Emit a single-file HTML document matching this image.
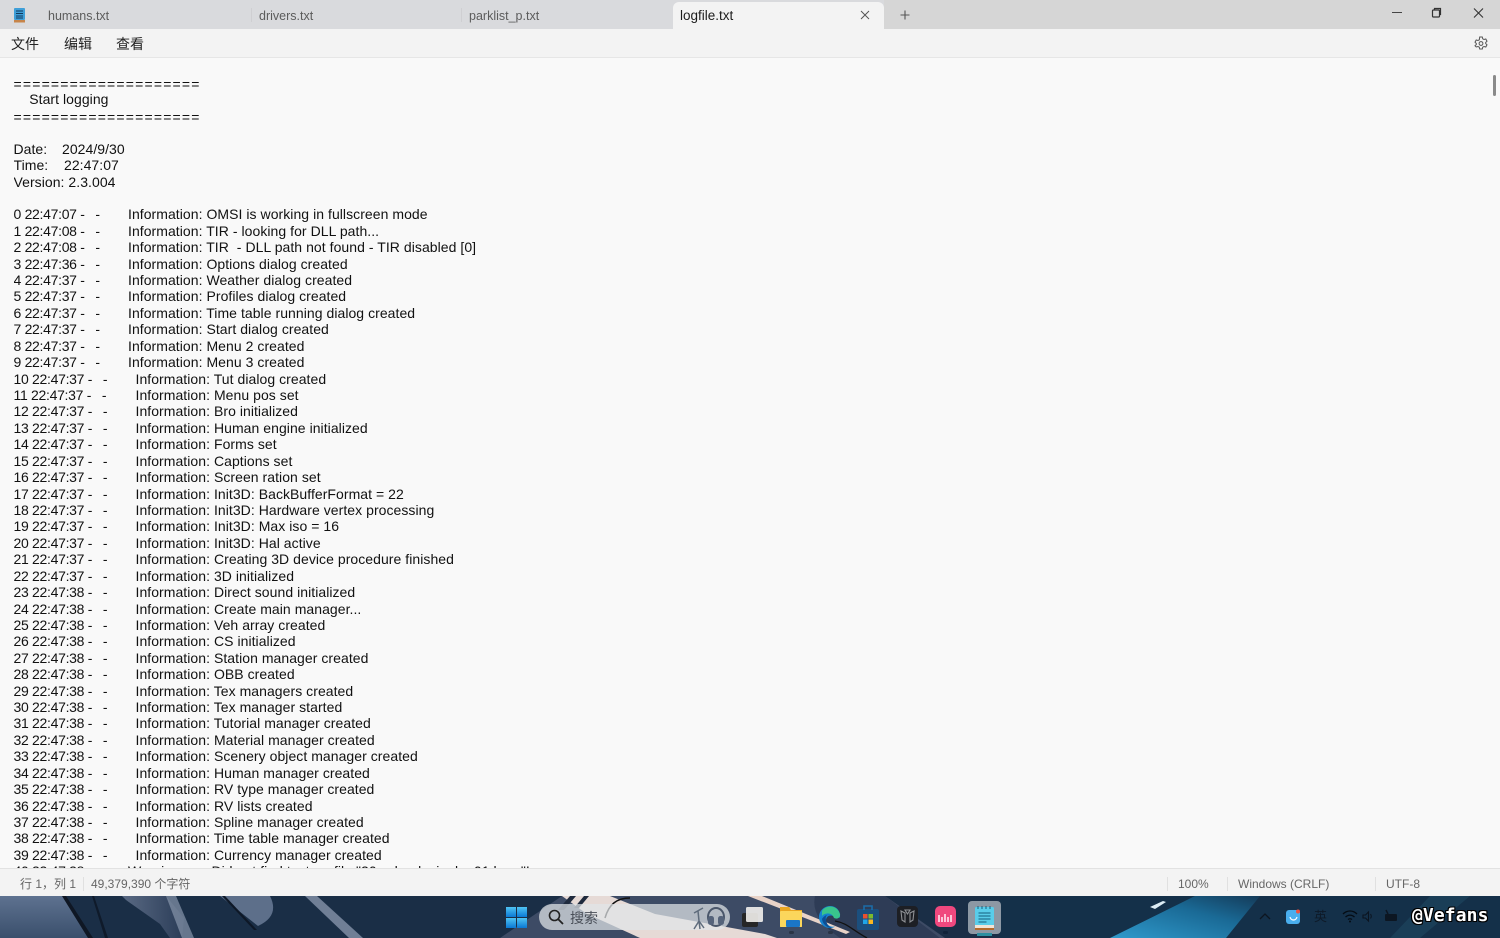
<!DOCTYPE html>
<html lang="zh-CN"><head><meta charset="utf-8"><title>logfile.txt</title>
<style>
html,body{margin:0;padding:0;width:1500px;height:938px;overflow:hidden;background:#f9f9f9}
body{position:relative;font-family:"Liberation Sans","Noto Sans CJK SC",sans-serif;color:#1a1a1a}
.abs{position:absolute;white-space:pre}
#tabbar{left:0;top:0;width:1500px;height:29px;background:#d9dadd}
#tabbar2{left:884px;top:0;width:616px;height:29px;background:#d6d6d6}
#menu{left:0;top:29px;width:1500px;height:28px;background:#f3f3f3;border-bottom:1px solid #e6e6e6}
#active{left:673px;top:2px;width:211px;height:27px;background:#f3f3f3;border-radius:6px 6px 0 0}
.tab{font-size:12.5px;color:#5c5c5c;top:9px}
.sep{position:absolute;width:1px;background:#cfcfd2;top:8px;height:14px}
.m{font-size:14px;top:34px;color:#222}
#edit{left:13.5px;top:75px;font-size:14px;line-height:16.43px;color:#111;letter-spacing:.05px;white-space:normal;width:1400px;height:793px;overflow:hidden}
#edit div{height:16.43px;white-space:pre}
#edit u{text-decoration:none;display:inline-block;letter-spacing:-.3px}
#edit .eq{letter-spacing:1.18px;position:relative;top:1px}
.g1 u{width:114.5px}.g2 u{width:122px}
#status{left:0;top:868px;width:1500px;height:27px;background:#f3f3f3;border-top:1px solid #e2e2e2}
.st{font-size:12px;color:#666;top:877px}
.ss{position:absolute;width:1px;height:14px;top:877px;background:#e0e0e0}
#task{left:0;top:896px;width:1500px;height:42px;overflow:hidden;background:#1a2f49}
#search{left:539px;top:904px;width:191px;height:26px;border-radius:13px;background:rgba(225,228,232,.72)}
#wm{left:1412px;top:905px;font:bold 18px "DejaVu Sans Mono","Liberation Mono",monospace;color:#fff;letter-spacing:.1px;text-shadow:1px 0 #000,-1px 0 #000,0 1px #000,0 -1px #000,1px 1px #000,-1px -1px #000,1px -1px #000,-1px 1px #000}
</style></head><body>
<div class="abs" id="tabbar"></div><div class="abs" id="tabbar2"></div>
<div class="abs" id="menu"></div><div class="abs" id="active"></div>
<svg class="abs" style="left:13px;top:7px" width="14" height="16" viewBox="0 0 14 16"><rect x="1" y="1" width="11" height="12" rx="1" fill="#3f9fd8"/><rect x="1" y="13" width="11" height="2.5" fill="#c7854a"/><path d="M3 4h7M3 6.5h7M3 9h7M3 11h7" stroke="#103a5e" stroke-width="1"/></svg>
<span class="abs tab" style="left:48px">humans.txt</span>
<i class="sep" style="left:251px"></i><span class="abs tab" style="left:259px">drivers.txt</span>
<i class="sep" style="left:461px"></i><span class="abs tab" style="left:469px">parklist_p.txt</span>
<span class="abs tab" style="left:680px;color:#1c1c1c;font-size:13.5px;top:8px">logfile.txt</span>
<svg class="abs" style="left:859px;top:9px" width="12" height="12" viewBox="0 0 12 12"><path d="M2 2l8 8M10 2l-8 8" stroke="#555" stroke-width="1"/></svg>
<svg class="abs" style="left:899px;top:9px" width="12" height="12" viewBox="0 0 12 12"><path d="M6 1.500v9M1.500 6h9" stroke="#555" stroke-width="1.100"/></svg>
<svg class="abs" style="left:1390px;top:6px" width="100" height="16" viewBox="0 0 100 16"><path d="M2 6.500h10" stroke="#444" stroke-width="1"/><rect x="42.500" y="4" width="7" height="7" rx="1" fill="none" stroke="#333" stroke-width="1.200"/><path d="M44.500 3.500V2.500h6v6h-1" fill="none" stroke="#333" stroke-width="1.200"/><path d="M84 2.500l9 9M93 2.500l-9 9" stroke="#333" stroke-width="1.100"/></svg>
<span class="abs m" style="left:11px">文件</span><span class="abs m" style="left:64px">编辑</span><span class="abs m" style="left:116px">查看</span>
<svg class="abs" style="left:1474px;top:36px" width="14" height="14" viewBox="0 0 14 14"><path d="M5.700 1h2.600l.4 1.800 1.300.7 1.800-.5 1.200 2.200-1.300 1.300v1l1.300 1.300-1.200 2.200-1.800-.5-1.300.7-.4 1.800H5.700l-.4-1.800-1.300-.7-1.800.5L1 9.800l1.300-1.300v-1L1 6.200 2.200 4l1.800.5 1.300-.7z" fill="none" stroke="#555" stroke-width="1"/><circle cx="7" cy="7.500" r="1.900" fill="none" stroke="#555" stroke-width="1"/></svg>
<div class="abs" id="edit"><div class="eq">====================</div><div>    Start logging</div><div class="eq">====================</div><div> </div><div>Date:<span style="word-spacing:-.25px">    </span>2024/9/30</div><div>Time:    22:47:07</div><div>Version: 2.3.004</div><div> </div><section class="g1"><div><u>0 22:47:07 -   -</u>Information: OMSI is working in fullscreen mode</div><div><u>1 22:47:08 -   -</u>Information: TIR - looking for DLL path...</div><div><u>2 22:47:08 -   -</u>Information: TIR  - DLL path not found - TIR disabled [0]</div><div><u>3 22:47:36 -   -</u>Information: Options dialog created</div><div><u>4 22:47:37 -   -</u>Information: Weather dialog created</div><div><u>5 22:47:37 -   -</u>Information: Profiles dialog created</div><div><u>6 22:47:37 -   -</u>Information: Time table running dialog created</div><div><u>7 22:47:37 -   -</u>Information: Start dialog created</div><div><u>8 22:47:37 -   -</u>Information: Menu 2 created</div><div><u>9 22:47:37 -   -</u>Information: Menu 3 created</div></section><section class="g2"><div><u>10 22:47:37 -   -</u>Information: Tut dialog created</div><div><u>11 22:47:37 -   -</u>Information: Menu pos set</div><div><u>12 22:47:37 -   -</u>Information: Bro initialized</div><div><u>13 22:47:37 -   -</u>Information: Human engine initialized</div><div><u>14 22:47:37 -   -</u>Information: Forms set</div><div><u>15 22:47:37 -   -</u>Information: Captions set</div><div><u>16 22:47:37 -   -</u>Information: Screen ration set</div><div><u>17 22:47:37 -   -</u>Information: Init3D: BackBufferFormat = 22</div><div><u>18 22:47:37 -   -</u>Information: Init3D: Hardware vertex processing</div><div><u>19 22:47:37 -   -</u>Information: Init3D: Max iso = 16</div><div><u>20 22:47:37 -   -</u>Information: Init3D: Hal active</div><div><u>21 22:47:37 -   -</u>Information: Creating 3D device procedure finished</div><div><u>22 22:47:37 -   -</u>Information: 3D initialized</div><div><u>23 22:47:38 -   -</u>Information: Direct sound initialized</div><div><u>24 22:47:38 -   -</u>Information: Create main manager...</div><div><u>25 22:47:38 -   -</u>Information: Veh array created</div><div><u>26 22:47:38 -   -</u>Information: CS initialized</div><div><u>27 22:47:38 -   -</u>Information: Station manager created</div><div><u>28 22:47:38 -   -</u>Information: OBB created</div><div><u>29 22:47:38 -   -</u>Information: Tex managers created</div><div><u>30 22:47:38 -   -</u>Information: Tex manager started</div><div><u>31 22:47:38 -   -</u>Information: Tutorial manager created</div><div><u>32 22:47:38 -   -</u>Information: Material manager created</div><div><u>33 22:47:38 -   -</u>Information: Scenery object manager created</div><div><u>34 22:47:38 -   -</u>Information: Human manager created</div><div><u>35 22:47:38 -   -</u>Information: RV type manager created</div><div><u>36 22:47:38 -   -</u>Information: RV lists created</div><div><u>37 22:47:38 -   -</u>Information: Spline manager created</div><div><u>38 22:47:38 -   -</u>Information: Time table manager created</div><div><u>39 22:47:38 -   -</u>Information: Currency manager created</div><div><u style="width:114.5px">40 22:47:38 -   -</u>Warning:       Did not find texture file "20_wheel_single_01.bmp"!</div></section></div>
<div class="abs" style="left:1493px;top:75px;width:3px;height:21px;background:#8a8a8a;border-radius:2px"></div>
<div class="abs" id="status"></div>
<span class="abs st" style="left:20px;top:875px">行 1，列 1</span><i class="ss" style="left:83px"></i>
<span class="abs st" style="left:91px;top:875px">49,379,390 个字符</span>
<i class="ss" style="left:1167px"></i><span class="abs st" style="left:1178px">100%</span>
<i class="ss" style="left:1227px"></i><span class="abs st" style="left:1238px">Windows (CRLF)</span>
<i class="ss" style="left:1375px"></i><span class="abs st" style="left:1386px">UTF-8</span>

<svg class="abs" id="task" viewBox="0 0 1500 42" width="1500" height="42" preserveAspectRatio="none">
<defs><linearGradient id="bl" x1="0" y1="1" x2="1" y2="0"><stop offset="0" stop-color="#2f9acc"/><stop offset=".6" stop-color="#1a6a96"/><stop offset="1" stop-color="#143a58"/></linearGradient>
<linearGradient id="lft" x1="0" y1="0" x2="0" y2="1"><stop offset="0" stop-color="#5e7290"/><stop offset="1" stop-color="#3a4f6c"/></linearGradient>
<linearGradient id="mid" x1="0" y1="0" x2="1" y2="0"><stop offset="0" stop-color="#5a6a84"/><stop offset="1" stop-color="#2a3c57"/></linearGradient>
<linearGradient id="win" x1="0" y1="0" x2="0" y2="1"><stop offset="0" stop-color="#4fc3f2"/><stop offset="1" stop-color="#0a78d4"/></linearGradient></defs>
<rect width="1500" height="42" fill="#1a2e46"/>
<path d="M1000 0H1500V42H1000z" fill="#143049"/>
<path d="M0 0H65L92 42H0z" fill="url(#lft)"/>
<path d="M62 0h4l27 42h-5z" fill="#0f1724"/>
<path d="M92 0h2l14 42h-3z" fill="#0f1a2a"/>
<path d="M122 0h44l18 22-2 20h-12l-10-14-34-24z" fill="url(#mid)"/>
<path d="M166 0h10l18 42h-12z" fill="#8796ab" opacity=".7"/>
<path d="M220 0h50q10 20-12 30z" fill="#5d6f8a"/>
<path d="M222 0h3l32 34h-3z" fill="#0e1827"/>
<path d="M305 0h12l46 42h-14z" fill="#707f96"/>
<path d="M500 42L562 0H885l60 42z" fill="#3d4b65"/>
<path d="M815 0h70l55 42h-100q-30-20-25-42z" fill="#2e3c56"/>
<path d="M562 0h48l45 18 110 20 12 4H640l-35-16-18-8z" fill="#e6dad6"/>
<path d="M570 0h6l-12 14h-6zM584 0h5l-10 12h-5z" fill="#1f2a3d"/>
<path d="M748 0h14l88 36-4 2z" fill="#e8d3c8"/>
<path d="M605 22c4-14 12-20 25-20" fill="none" stroke="#111" stroke-width="1.500"/>
<path d="M835 25c12 2 16 8 32 17" fill="none" stroke="#111" stroke-width="1.300"/>
<path d="M1110 42L1195 0h65l-34 42z" fill="url(#bl)"/>
<path d="M1150 11l13-6 3 1-11 7z" fill="#dcecf4"/>
<path d="M1390 42l40-42h40l-50 42z" fill="#1e4760" opacity=".6"/>
<rect x="506" y="11" width="10" height="10" fill="url(#win)"/><rect x="517" y="11" width="10" height="10" fill="url(#win)"/><rect x="506" y="22" width="10" height="10" fill="url(#win)"/><rect x="517" y="22" width="10" height="10" fill="url(#win)"/>
</svg>
<div class="abs" id="search"></div>
<svg class="abs" style="left:547px;top:908px" width="18" height="18" viewBox="0 0 18 18"><circle cx="7.500" cy="7.500" r="5" fill="none" stroke="#222" stroke-width="1.600"/><path d="M11 11l5 5" stroke="#222" stroke-width="1.800"/></svg>
<span class="abs" style="left:570px;top:908px;font-size:14px;color:#4a4f58">搜索</span>
<svg class="abs" style="left:690px;top:905px" width="36" height="26" viewBox="0 0 36 26"><path d="M4 8l9-5M8 6l1 10M9 16l-5 8M9 16l1 8M9 16l5 7" fill="none" stroke="#5f6c7c" stroke-width="1.500"/><ellipse cx="26" cy="12" rx="8" ry="9" fill="none" stroke="#4a566a" stroke-width="2"/><rect x="18" y="11" width="6" height="9" rx="2.500" fill="#55637a"/><rect x="28" y="11" width="6" height="9" rx="2.500" fill="#55637a"/></svg>
<svg class="abs" style="left:740px;top:904px" width="30" height="28" viewBox="0 0 30 28"><rect x="2" y="9" width="16" height="14" rx="2" fill="#262626"/><rect x="6" y="3" width="17" height="15" rx="1.500" fill="#f2efec" opacity=".9"/></svg>
<svg class="abs" style="left:779px;top:906px" width="24" height="22" viewBox="0 0 24 22"><path d="M1 1h9l2 3h11v17H1z" fill="#eaa620"/><rect x="1" y="5" width="22" height="16" rx="1" fill="#fbd65c"/><rect x="7" y="14" width="14" height="7" rx="1" fill="#1b76c8"/></svg>
<svg class="abs" style="left:819px;top:905px" width="22" height="24" viewBox="0 0 22 24"><path d="M11 1C5 1 0 6 0 12s5 11 11 11c2 0 4-.5 5-1.500-5 1-9-2-9-6 0-3 2-5 5-5 1.500 0 3 .8 4 2h5V11C21 5 17 1 11 1z" fill="#1583cf"/><path d="M3 6c3-6 15-7 18 3 .6 4-3 5.500-6 4-1-3-4-5-7-4.500-2 .3-4 1-5 2.500z" fill="#39c48c"/><path d="M7 15c-1-4 1-6 4-6-4 .5-7 3-8 5 .5 5 5 9 10 9-3-1-5.500-4-6-8z" fill="#0c4f95"/></svg>
<svg class="abs" style="left:857px;top:905px" width="22" height="25" viewBox="0 0 22 25"><rect y="4" width="22" height="21" rx="2" fill="#1b4f7e"/><path d="M7 5V1h8v4" fill="none" stroke="#1b6da8" stroke-width="1.600"/><rect x="6" y="9" width="4.500" height="4.500" fill="#e9502f"/><rect x="11.500" y="9" width="4.500" height="4.500" fill="#7cbb2c"/><rect x="6" y="14.500" width="4.500" height="4.500" fill="#1fa6e8"/><rect x="11.500" y="14.500" width="4.500" height="4.500" fill="#f9b821"/></svg>
<svg class="abs" style="left:897px;top:906px" width="21" height="21" viewBox="0 0 21 21"><rect width="21" height="21" rx="4" fill="#1d1f24"/><path d="M4 5l4 2v9l-3-2zM17 5l-4 2v9l3-2zM8 4h5l-2.500 4z" fill="none" stroke="#8f9195" stroke-width="1.100"/></svg>
<svg class="abs" style="left:935px;top:906px" width="21" height="21" viewBox="0 0 21 21"><rect width="21" height="21" rx="5" fill="#f0487e"/><path d="M4 16V9M7 16v-5M10 16V8M13 16v-5M16 16V9" stroke="#ffe5ee" stroke-width="1.600"/></svg>
<div class="abs" style="left:968px;top:901px;width:33px;height:33px;border-radius:4px;background:#8d98a4"></div>
<svg class="abs" style="left:974px;top:905px" width="21" height="27" viewBox="0 0 21 27"><rect x="1" y="2" width="19" height="19" rx="1.500" fill="#59cdea"/><rect x="1" y="20" width="19" height="3" fill="#f1e4d6"/><rect x="1" y="23" width="19" height="2" fill="#b26a2c"/><path d="M4.500 8h12M4.500 11h12M4.500 14h12M4.500 17h8" stroke="#155f7d" stroke-width="1.100"/><path d="M4 1v3M8 1v3M12 1v3M16 1v3" stroke="#155f7d" stroke-width="1"/></svg>
<div class="abs" style="left:977px;top:933px;width:15px;height:3px;background:#2c8fa0"></div>
<div class="abs" style="left:789px;top:931px;width:5px;height:3px;border-radius:2px;background:#2a3446"></div>
<div class="abs" style="left:828px;top:931px;width:5px;height:3px;border-radius:2px;background:#2a3446"></div>
<div class="abs" style="left:943px;top:931px;width:5px;height:3px;border-radius:2px;background:#10233a"></div>
<svg class="abs" style="left:1259px;top:912px" width="12" height="9" viewBox="0 0 12 9"><path d="M1 7l5-5 5 5" fill="none" stroke="#0d1520" stroke-width="1.300"/></svg>
<svg class="abs" style="left:1286px;top:909px" width="15" height="15" viewBox="0 0 15 15"><rect width="14" height="14" y="1" rx="3" fill="#49aeee"/><path d="M4 8c1 4 6 4 7 0" fill="none" stroke="#fff" stroke-width="1.200"/><circle cx="12" cy="2.500" r="2" fill="#f0523e"/></svg>
<span class="abs" style="left:1314px;top:906px;font-size:13px;color:#0e1a28">英</span>
<svg class="abs" style="left:1342px;top:909px" width="60" height="15" viewBox="0 0 60 15"><path d="M1 5c4-4 10-4 14 0M3.500 8c3-2.500 6-2.500 9 0M6 10.500c1.300-1 2.700-1 4 0" fill="none" stroke="#050c14" stroke-width="1.300"/><circle cx="8" cy="12.500" r="1" fill="#050c14"/><path d="M21 6h2.500l3-3v9l-3-3H21z" fill="none" stroke="#0b1420" stroke-width="1.100"/><path d="M28.500 5c1 1.500 1 3 0 4.500" fill="none" stroke="#0b1420"/><rect x="43" y="5" width="12" height="7" rx="1" fill="#0c1622"/><path d="M44 1l2 4" stroke="#0c1622" stroke-width="1.500"/></svg>
<span class="abs" id="wm">@Vefans</span>
</body></html>
